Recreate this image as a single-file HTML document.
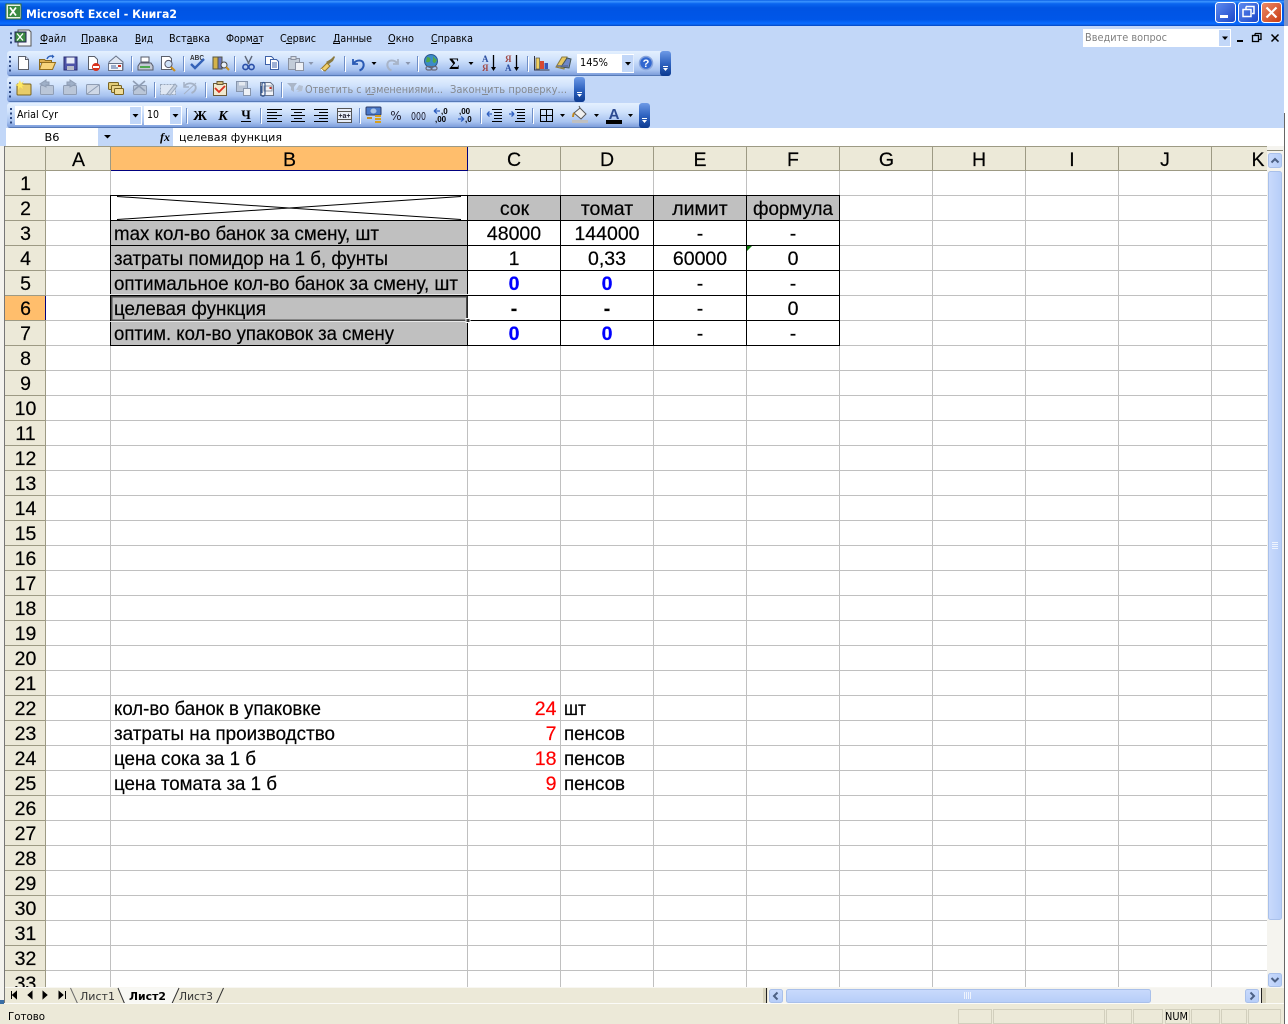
<!DOCTYPE html>
<html><head><meta charset="utf-8"><title>Microsoft Excel - Книга2</title>
<style>
html,body{margin:0;padding:0;background:#fff;width:1288px;height:1024px;overflow:hidden}
svg{display:block}
text{white-space:pre}
.c{font-family:"Liberation Sans",sans-serif;font-size:19.5px;fill:#000;stroke:#000;stroke-width:.2px}
.m{font-family:"DejaVu Sans","Liberation Sans",sans-serif;font-size:10.5px;fill:#000}
.d{font-family:"DejaVu Sans","Liberation Sans",sans-serif;font-size:10.5px;fill:#85898f}
.cm{text-anchor:middle}
.b{font-weight:bold}
.r{fill:#f00;stroke:#f00;text-anchor:end}
.u{stroke:#000;stroke-width:1;shape-rendering:crispEdges}
.s{shape-rendering:crispEdges}
</style></head><body>
<svg width="1288" height="1024" viewBox="0 0 1288 1024" xmlns="http://www.w3.org/2000/svg">
<defs>
<linearGradient id="title" x1="0" y1="0" x2="0" y2="1">
<stop offset="0" stop-color="#0a5fe4"/><stop offset=".06" stop-color="#3d95ff"/><stop offset=".14" stop-color="#0a66f0"/><stop offset=".3" stop-color="#0054e3"/><stop offset=".75" stop-color="#0056e8"/><stop offset=".9" stop-color="#0a6cff"/><stop offset=".97" stop-color="#0a5ce0"/><stop offset="1" stop-color="#0038b0"/>
</linearGradient>
<linearGradient id="tb" x1="0" y1="0" x2="0" y2="1">
<stop offset="0" stop-color="#e4f0fe"/><stop offset=".35" stop-color="#d0e2fc"/><stop offset=".75" stop-color="#a8c3f0"/><stop offset=".95" stop-color="#7f9fdc"/><stop offset="1" stop-color="#3d619f"/>
</linearGradient>
<linearGradient id="chev" x1="0" y1="0" x2="0" y2="1">
<stop offset="0" stop-color="#6e9ae6"/><stop offset=".5" stop-color="#2f63c0"/><stop offset="1" stop-color="#0c3a90"/>
</linearGradient>
<linearGradient id="min" x1="0" y1="0" x2="1" y2="1"><stop offset="0" stop-color="#5f8cf0"/><stop offset="1" stop-color="#1a45c8"/></linearGradient>
<linearGradient id="cls" x1="0" y1="0" x2="1" y2="1"><stop offset="0" stop-color="#ec8b6a"/><stop offset="1" stop-color="#c83a10"/></linearGradient>
<linearGradient id="sb" x1="0" y1="0" x2="1" y2="0"><stop offset="0" stop-color="#c9dafc"/><stop offset="1" stop-color="#b6cdf8"/></linearGradient>
<linearGradient id="sb2" x1="0" y1="0" x2="0" y2="1"><stop offset="0" stop-color="#c9dafc"/><stop offset="1" stop-color="#b6cdf8"/></linearGradient>
</defs>

<!-- window chrome -->
<rect width="1288" height="1024" fill="#fff"/>
<rect x="0" y="26" width="1284" height="102" fill="#c2d7f8"/>
<rect x="0" y="0" width="1284" height="26" fill="url(#title)"/>
<rect x="1284" y="0" width="4" height="26" fill="#8094c4"/>
<rect x="1284" y="113" width="1" height="911" fill="#666" class="s"/>

<!-- title -->
<g>
<rect x="6" y="4" width="15" height="15" fill="#eaf3e4" stroke="#2a6a30" stroke-width="1"/>
<rect x="8" y="6" width="12" height="11" fill="#3a8a40"/>
<path d="M10 7.500l6 8M16 7.500l-6 8" stroke="#fff" stroke-width="1.800"/>
<text x="26" y="18" font-family="DejaVu Sans,Liberation Sans,sans-serif" font-weight="bold" font-size="11.500" fill="#fff" textLength="151" lengthAdjust="spacingAndGlyphs">Microsoft Excel - Книга2</text>
<rect x="1215.500" y="2.500" width="20" height="20" rx="3" fill="url(#min)" stroke="#fff"/>
<rect x="1220" y="15" width="8" height="3" fill="#fff"/>
<rect x="1238.500" y="2.500" width="20" height="20" rx="3" fill="url(#min)" stroke="#fff"/>
<path d="M1246 6.500h8v7h-2M1246 6.500v2.500" fill="none" stroke="#fff" stroke-width="1.500"/>
<rect x="1243" y="9.500" width="8" height="7" fill="none" stroke="#fff" stroke-width="1.500"/>
<rect x="1261.500" y="2.500" width="20" height="20" rx="3" fill="url(#cls)" stroke="#fff"/>
<path d="M1266.500 7.500l10 10M1276.500 7.500l-10 10" stroke="#fff" stroke-width="2.200"/>
</g>

<!-- menu -->
<g>
<path d="M10 33.500h2M10 38h2M10 42.500h2" stroke="#2a4580" stroke-width="2" class="s"/>
<path d="M18 30h11l2 2v14H18z" fill="#f4f6fa" stroke="#555"/>
<rect x="15" y="32" width="11" height="10" fill="#3b8a40" stroke="#225"/>
<path d="M17 33.500l6 7M23 33.500l-6 7" stroke="#fff" stroke-width="1.300"/>
</g>
<text class="m" x="40" y="42" textLength="26" lengthAdjust="spacingAndGlyphs">Файл</text>
<text class="m" x="81" y="42" textLength="37" lengthAdjust="spacingAndGlyphs">Правка</text>
<text class="m" x="135" y="42" textLength="18" lengthAdjust="spacingAndGlyphs">Вид</text>
<text class="m" x="169" y="42" textLength="41" lengthAdjust="spacingAndGlyphs">Вставка</text>
<text class="m" x="226" y="42" textLength="38" lengthAdjust="spacingAndGlyphs">Формат</text>
<text class="m" x="280" y="42" textLength="36" lengthAdjust="spacingAndGlyphs">Сервис</text>
<text class="m" x="333" y="42" textLength="39" lengthAdjust="spacingAndGlyphs">Данные</text>
<text class="m" x="388" y="42" textLength="26" lengthAdjust="spacingAndGlyphs">Окно</text>
<text class="m" x="431" y="42" textLength="42" lengthAdjust="spacingAndGlyphs">Справка</text>
<path class="u" d="M40 43.500h7M81 43.500h7M135 43.500h6M187 43.500h6M252 43.500h8M286 43.500h6M333 43.500h7M388 43.500h7M431 43.500h6"/>

<!-- ask box -->
<rect x="1083" y="29" width="148" height="18" fill="#fff"/>
<rect x="1219" y="30" width="11" height="16" fill="#c2d7f8"/>
<path d="M1222 36.500h6l-3 3.500z" fill="#000"/>
<text class="d" x="1085" y="41" textLength="82" lengthAdjust="spacingAndGlyphs" style="fill:#7f7f7f">Введите вопрос</text>
<rect x="1237" y="40" width="6" height="2" fill="#000"/>
<path d="M1255 33.500h6v6h-2M1255 33.500v2" fill="none" stroke="#000" stroke-width="1.300"/>
<rect x="1252.500" y="35.500" width="6" height="6" fill="none" stroke="#000" stroke-width="1.300"/>
<path d="M1271.500 34.500l7 7M1278.500 34.500l-7 7" stroke="#000" stroke-width="1.500"/>

<!-- toolbars -->
<rect x="7" y="51" width="664" height="25" rx="3" fill="url(#tb)"/>
<rect x="660" y="51" width="11" height="25" rx="3" fill="url(#chev)"/>
<rect x="7" y="77" width="578" height="25" rx="3" fill="url(#tb)"/>
<rect x="574" y="77" width="11" height="25" rx="3" fill="url(#chev)"/>
<rect x="7" y="103" width="643" height="25" rx="3" fill="url(#tb)"/>
<rect x="639" y="103" width="11" height="25" rx="3" fill="url(#chev)"/>
<g fill="#fff" class="s">
<rect x="663" y="66" width="5" height="1"/><rect x="577" y="92" width="5" height="1"/><rect x="642" y="118" width="5" height="1"/>
</g>
<path fill="#fff" d="M663 68h5l-2.500 3zM577 94h5l-2.500 3zM642 120h5l-2.500 3z"/>
<!-- grips -->
<path class="s" stroke="#2a4580" stroke-width="2" d="M10 56v2M10 60.500v2M10 65v2M10 69.500v2M10 82v2M10 86.500v2M10 91v2M10 95.500v2M11 108v2M11 112.500v2M11 117v2M11 121.500v2"/>
<!-- separators -->
<g class="s">
<path stroke="#6f8fc8" d="M131.500 56v15M183.500 56v15M234.500 56v15M344.500 56v15M417.500 56v15M527.500 56v15M154.500 82v15M205.500 82v15M281.500 82v15M186.500 108v15M260.500 108v15M359.500 108v15M480.500 108v15M532.500 108v15"/>
<path stroke="#fff" d="M132.500 57v15M184.500 57v15M235.500 57v15M345.500 57v15M418.500 57v15M528.500 57v15M155.500 83v15M206.500 83v15M282.500 83v15M187.500 109v15M261.500 109v15M360.500 109v15M481.500 109v15M533.500 109v15"/>
</g>

<!-- TB1 icons -->
<path d="M18.500 56.500h7l3 3v10h-10z" fill="#fff" stroke="#5a5f6a"/><path d="M25.500 56.500v3h3" fill="#dde" stroke="#5a5f6a"/>
<path d="M39.500 59.500h5l1 1h6v2h-12zM39.500 62v7.500" fill="#e0b050" stroke="#8a6a20"/>
<path d="M39.500 69.500l2.500-7h13.500l-3 7z" fill="#f8d47c" stroke="#946f20"/>
<path d="M47 59c1-3 4-3.500 6-2.500" fill="none" stroke="#2c5fb8" stroke-width="1.400"/><path d="M52 54.500l2.500 2-2.500 2z" fill="#2c5fb8"/>
<rect x="64" y="57" width="13" height="13" fill="#4e54a8" stroke="#2a2e70"/><rect x="66.500" y="57.500" width="8" height="6" fill="#e8ecf8"/><rect x="67" y="66" width="7" height="4" fill="#b8bcc8"/>
<path d="M88.500 56.500h6l3 3v10h-9z" fill="#fff" stroke="#5a5f6a"/><circle cx="96" cy="67" r="4" fill="#d8301a"/><rect x="93" y="66" width="6" height="2" fill="#fff"/>
<path d="M109 62l7-6 7 6v8h-14z" fill="#dfe7f4" stroke="#6a7488"/><rect x="108.500" y="63.500" width="14" height="7" fill="#f4f6fa" stroke="#6a7488"/><path d="M111 66h5M111 68h7" stroke="#45629a"/><rect x="118" y="65" width="3" height="2" fill="#c83020"/>
<path d="M140 63h11l2 3v4h-15v-4z" fill="#c4c9d6" stroke="#555a68"/><rect x="141" y="57" width="8" height="5" fill="#fff" stroke="#555a68"/><rect x="140" y="66" width="10" height="2" fill="#50a850"/>
<path d="M161.500 56.500h8l2 2v11h-10z" fill="#fff" stroke="#5a5f6a"/><circle cx="168.500" cy="64" r="3.600" fill="#cfe2f8" stroke="#556"/><path d="M171 67l4 4" stroke="#c89020" stroke-width="2.200"/>
<text x="190" y="60" font-family="Liberation Sans,sans-serif" font-size="7" font-weight="bold" fill="#333" textLength="14" lengthAdjust="spacingAndGlyphs">ABC</text>
<path d="M191 64l4 4 9-9" fill="none" stroke="#3462b8" stroke-width="2.400"/>
<rect x="213" y="57" width="5" height="12" fill="#d4b24a" stroke="#554"/><rect x="218" y="57" width="4" height="12" fill="#6a78c0" stroke="#554"/><circle cx="224" cy="65" r="3" fill="#e8f0fa" stroke="#444"/><path d="M226 67l3 3" stroke="#c89020" stroke-width="2"/>
<path d="M245 56l4 8M252 56l-4 8" stroke="#606878" stroke-width="1.400"/><circle cx="245.500" cy="67" r="2.600" fill="none" stroke="#2a4fa8" stroke-width="1.600"/><circle cx="251.500" cy="67" r="2.600" fill="none" stroke="#2a4fa8" stroke-width="1.600"/>
<path d="M265.500 56.500h6l2 2v6h-8z" fill="#fff" stroke="#3e62a8"/><path d="M270.500 59.500h6l2 2v8h-8z" fill="#fff" stroke="#3e62a8"/><path d="M272 63h5M272 65h5M272 67h5" stroke="#3e62a8"/>
<rect x="288.500" y="58.500" width="11" height="11" fill="#c2ccd8" stroke="#8a92a2"/><rect x="291" y="56.500" width="5" height="3" fill="#d6dbe2" stroke="#8a92a2"/><rect x="295.500" y="62.500" width="8" height="8" fill="#eef1f6" stroke="#8a92a2"/>
<path d="M308.500 62h5l-2.500 3z" fill="#8a96ae"/>
<path d="M321 69l6-6 3 3-5 5z" fill="#f0d070" stroke="#987a28"/><path d="M326 62l5-3 3-3 1 1-2 4-4 3z" fill="#8a7a40"/><path d="M321 69l2 2" stroke="#fff"/>
<path d="M353 59v5h5" fill="none" stroke="#2a5ab4" stroke-width="1.800"/><path d="M353.500 63.500c3-4 9-4 10 0 .7 3-1 6-4 7" fill="none" stroke="#2a5ab4" stroke-width="2"/>
<path d="M371.500 62h5l-2.500 3z" fill="#000"/>
<path d="M398 59v5h-5" fill="none" stroke="#a8b4c8" stroke-width="1.800"/><path d="M397.500 63.500c-3-4-9-4-10 0-.7 3 1 6 4 7" fill="none" stroke="#a8b4c8" stroke-width="2"/>
<path d="M405.500 62h5l-2.500 3z" fill="#8a96ae"/>
<circle cx="431" cy="61" r="6.500" fill="#3b8bc8" stroke="#2c5a90"/><path d="M427 57c3 0 4 2 3 4s-3 1-4 1M433 56c1 2 3 3 4 4l-2 3c-2 0-3-2-2-3z" fill="#50a848"/>
<rect x="426" y="66.500" width="6" height="3.500" rx="1.700" fill="none" stroke="#667" stroke-width="1.200"/><rect x="431" y="66.500" width="6" height="3.500" rx="1.700" fill="none" stroke="#667" stroke-width="1.200"/>
<text x="449" y="69" font-family="Liberation Serif,serif" font-weight="bold" font-size="16" fill="#000">Σ</text>
<path d="M468.500 62h5l-2.500 3z" fill="#000"/>
<text x="482" y="62" font-family="Liberation Serif,serif" font-weight="bold" font-size="9" fill="#2c4fa0">А</text>
<text x="482" y="71" font-family="Liberation Serif,serif" font-weight="bold" font-size="9" fill="#a04a48">Я</text>
<path d="M493.500 55v13" stroke="#000" stroke-width="1.300"/><path d="M491 67h5l-2.500 4z" fill="#000"/>
<text x="505" y="62" font-family="Liberation Serif,serif" font-weight="bold" font-size="9" fill="#a04a48">Я</text>
<text x="505" y="71" font-family="Liberation Serif,serif" font-weight="bold" font-size="9" fill="#2c4fa0">А</text>
<path d="M516.500 55v13" stroke="#000" stroke-width="1.300"/><path d="M514 67h5l-2.500 4z" fill="#000"/>
<path class="s" d="M534.500 56v14h15" fill="none" stroke="#334"/><rect x="536" y="58" width="3.500" height="11" fill="#f0d060" stroke="#554" stroke-width=".7"/><rect x="540" y="61" width="4" height="8" fill="#d84830"/><rect x="544.500" y="63" width="3.500" height="6" fill="#3858b8"/>
<path d="M556 67l6-10h5l-3 12z" fill="#e8c860" stroke="#8a7a40"/><path d="M561 67l6-9 4 1-2 9z" fill="#7088c8" stroke="#455"/><path d="M557 66h11" stroke="#5a6a98" stroke-width="1.500"/>
<rect x="577" y="54" width="57" height="19" fill="#fff"/>
<rect x="622" y="55" width="11.500" height="17" fill="#c2d7f8"/><path d="M625 62h6l-3 3.500z" fill="#000"/>
<text class="m" x="580" y="66" textLength="28" lengthAdjust="spacingAndGlyphs" style="fill:#000">145%</text>
<circle cx="646" cy="63" r="6.500" fill="#3268d0" stroke="#8aa6dc" stroke-width="1.500"/><text x="646" y="67" text-anchor="middle" font-family="Liberation Sans,sans-serif" font-weight="bold" font-size="11" fill="#fff">?</text>

<!-- TB2 icons -->
<rect x="17" y="84" width="14" height="11" rx="1" fill="#e8cc68" stroke="#7a6420"/><path d="M20 80l1 3 3-2-2 3 3 1-3 1 1 3-3-2-2 3v-4l-3-1 3-1z" fill="#ffe860"/>
<g fill="#bac6d8" stroke="#8f9db4"><rect x="40.500" y="85.500" width="13" height="9" rx="1"/><path d="M46 80l-6 4 6 3v-2h3v-3h-3z" fill="#9fb0c8"/>
<rect x="63.500" y="85.500" width="13" height="9" rx="1"/><path d="M70 80l6 4-6 3v-2h-3v-3h3z" fill="#9fb0c8"/>
<rect x="86.500" y="84.500" width="13" height="10" rx="1" fill="#cfd8e6"/>
<rect x="133.500" y="85.500" width="13" height="9" rx="1"/></g>
<path d="M87 94l12-9" stroke="#8f9db4"/>
<path d="M133 81l12 10M145 81l-12 10" stroke="#8f9db4" stroke-width="1.600"/>
<rect x="108.500" y="82.500" width="10" height="7" rx="1" fill="#e2cc78" stroke="#7a6420"/><rect x="111.500" y="85.500" width="10" height="7" rx="1" fill="#ead48a" stroke="#7a6420"/><rect x="114.500" y="88.500" width="9" height="6" rx="1" fill="#f0dc98" stroke="#7a6420"/>
<rect x="160.500" y="84.500" width="15" height="10" fill="#dfe7f3" stroke="#9aa8bc" stroke-dasharray="2 1"/><path d="M167 94l8-10 2 2-7 9z" fill="#c8d2e2" stroke="#9aa8bc"/>
<path d="M184 82v5h5" fill="none" stroke="#a5b2c6" stroke-width="1.500"/><path d="M184.500 86c3-4 9-3 11 0 1 3-1 6-4 7" fill="none" stroke="#a5b2c6" stroke-width="1.800"/><path d="M184 94l12-11" stroke="#a5b2c6"/>
<rect x="213.500" y="83.500" width="13" height="12" fill="#f2ead0" stroke="#6a5a38"/><rect x="217" y="81.500" width="6" height="3" fill="#d8c080" stroke="#6a5a38"/><path d="M215 88l4 4 6-6" fill="none" stroke="#d83020" stroke-width="1.800"/>
<rect x="236.500" y="81.500" width="11" height="10" fill="#b8c4d6" stroke="#8795ac"/><rect x="239" y="82" width="6" height="3.500" fill="#e4e9f0"/><rect x="243.500" y="88.500" width="7" height="7" fill="#eef1f6" stroke="#8795ac"/>
<path d="M260.500 82.500h10l3 3v10h-13z" fill="#f2f4f8" stroke="#6a7488"/><rect x="264" y="86" width="8" height="5" fill="#f0f2f6" stroke="#8c94a4"/><rect x="269.500" y="87" width="2" height="2" fill="#c83020"/>
<path d="M261 86v8c0 3 4 3 4 0v-10c0-2-3-2-3 0v9" fill="none" stroke="#3a5a90" stroke-width="1.200"/>
<path d="M287 83h10l-3 4v5l-3-2v-3z" fill="#aab6c8"/><path d="M299 85l4 1-1 5-5 1 2-2-3 0z" fill="#b4c0d2"/>
<text class="d" x="305" y="93" textLength="138" lengthAdjust="spacingAndGlyphs">Ответить с изменениями...</text>
<text class="d" x="450" y="93" textLength="117" lengthAdjust="spacingAndGlyphs">Закончить проверку...</text>
<path d="M367 94.500h7M482 94.500h6" stroke="#85898f" class="s"/>

<!-- TB3 -->
<rect x="15" y="106" width="127" height="19" fill="#fff"/>
<rect x="130" y="107" width="11" height="17" fill="#c2d7f8"/><path d="M132.500 114h6l-3 3.500z" fill="#000"/>
<text class="m" x="17" y="118" textLength="41" lengthAdjust="spacingAndGlyphs">Arial Cyr</text>
<rect x="144" y="106" width="38" height="19" fill="#fff"/>
<rect x="170" y="107" width="11" height="17" fill="#c2d7f8"/><path d="M172.500 114h6l-3 3.500z" fill="#000"/>
<text class="m" x="147" y="118" textLength="12" lengthAdjust="spacingAndGlyphs">10</text>
<text x="200" y="120" text-anchor="middle" font-family="Liberation Serif,serif" font-weight="bold" font-size="14" fill="#000">Ж</text>
<text x="223" y="120" text-anchor="middle" font-family="Liberation Serif,serif" font-weight="bold" font-style="italic" font-size="14" fill="#000">К</text>
<text x="246" y="119" text-anchor="middle" font-family="Liberation Serif,serif" font-weight="bold" font-size="13" fill="#000">Ч</text><path class="s" d="M241 121.500h10" stroke="#000"/>
<g class="s" stroke="#000">
<path d="M267 109.500h15M267 112.500h10M267 115.500h15M267 118.500h10M267 121.500h15"/>
<path d="M291 109.500h14M294 112.500h8M291 115.500h14M294 118.500h8M291 121.500h14"/>
<path d="M314 109.500h14M319 112.500h9M314 115.500h14M319 118.500h9M314 121.500h14"/>
</g>
<rect x="337.500" y="108.500" width="14" height="14" fill="#e8eefa" stroke="#555"/><path class="s" d="M338 111.500h13M338 119.500h13" stroke="#555"/><text x="344.500" y="118" text-anchor="middle" font-family="Liberation Sans,sans-serif" font-weight="bold" font-size="7" fill="#223">+a+</text>
<rect x="366" y="107" width="15" height="8" rx="1" fill="#4a78c8" stroke="#2a3a68"/><ellipse cx="373.500" cy="111" rx="3" ry="2.500" fill="#a8c4e8"/>
<path d="M375 116h6M375 119h6M375 122h6" stroke="#d8a020" stroke-width="2"/><path d="M367 118h5" stroke="#c89020" stroke-width="2"/>
<text x="396" y="120" text-anchor="middle" font-family="DejaVu Sans,sans-serif" font-size="12" fill="#223">%</text>
<text x="418.500" y="120" text-anchor="middle" font-family="DejaVu Sans,sans-serif" font-size="10.500" fill="#223" textLength="15" lengthAdjust="spacingAndGlyphs">000</text>
<path d="M434 111h6M434 111l3-2.500M434 111l3 2.500" stroke="#3060c0" stroke-width="1.300" fill="none"/>
<text x="441" y="114" font-family="Liberation Sans,sans-serif" font-weight="bold" font-size="8" fill="#000">,0</text>
<text x="435" y="122" font-family="Liberation Sans,sans-serif" font-weight="bold" font-size="8" fill="#000">,00</text>
<text x="459" y="114" font-family="Liberation Sans,sans-serif" font-weight="bold" font-size="8" fill="#000">,00</text>
<path d="M458 119h6M464 119l-3-2.500M464 119l-3 2.500" stroke="#3060c0" stroke-width="1.300" fill="none"/>
<text x="465" y="122" font-family="Liberation Sans,sans-serif" font-weight="bold" font-size="8" fill="#000">,0</text>
<g class="s" stroke="#000"><path d="M492 109.500h10M494 112.500h8M494 115.500h8M494 118.500h8M492 121.500h10"/><path d="M515 109.500h10M517 112.500h8M517 115.500h8M517 118.500h8M515 121.500h10"/></g>
<path d="M487 114h5M487 114l2.500-2.500M487 114l2.500 2.500" stroke="#3060c0" stroke-width="1.300" fill="none"/>
<path d="M509 114h5M514 114l-2.500-2.500M514 114l-2.500 2.500" stroke="#3060c0" stroke-width="1.300" fill="none"/>
<rect x="540.500" y="109.500" width="12" height="12" fill="none" stroke="#000" class="s"/><path class="s" d="M546.500 110v11M541 115.500h11" stroke="#000"/>
<path d="M560 114h5l-2.500 3zM594 114h5l-2.500 3zM628 114h5l-2.500 3z" fill="#000"/>
<rect x="572" y="120" width="16" height="3" fill="#c0c0c0"/>
<path d="M574 113l6-5 6 6-5 5z" fill="#f0f0f0" stroke="#555"/><path d="M574 113c-1 2-1 3-1 4" stroke="#c08820" stroke-width="2" fill="none"/><path d="M580 108l-1-2" stroke="#555"/>
<rect x="606" y="120" width="16" height="4" fill="#000"/>
<text x="614" y="119" text-anchor="middle" font-family="Liberation Sans,sans-serif" font-weight="bold" font-size="15" fill="#2c4a90">A</text>

<!-- formula bar -->
<rect x="0" y="128" width="1284" height="18" fill="#fff"/>
<rect x="98" y="128" width="75" height="18" fill="#c2d7f8"/>
<rect x="0" y="128" width="6" height="18" fill="#c2d7f8"/>
<path d="M104 135h7l-3.500 3.500z" fill="#000"/>
<text class="m" x="52" y="141" text-anchor="middle" textLength="15" lengthAdjust="spacingAndGlyphs">B6</text>
<text x="165" y="141" text-anchor="middle" font-family="Liberation Serif,serif" font-style="italic" font-weight="bold" font-size="12" fill="#000">fx</text>
<text class="m" x="179" y="141" textLength="103" lengthAdjust="spacingAndGlyphs">целевая функция</text>

<!-- left strip -->
<rect x="0" y="146" width="5" height="858" fill="#f4f3ee"/>
<rect x="4" y="146" width="1" height="858" fill="#777" class="s"/>

<!-- header -->
<rect x="5" y="146" width="1262" height="25" fill="#ece9d8"/>
<rect x="111" y="147" width="356" height="23" fill="#ffbe6c"/>
<rect x="5" y="171" width="40" height="816" fill="#ece9d8"/>
<rect x="5" y="296" width="40" height="24" fill="#ffbe6c"/>
<rect x="46" y="171" width="1221" height="816" fill="#fff"/>

<!-- table fills -->
<rect x="111" y="221" width="356" height="124" fill="#c0c0c0"/>
<rect x="468" y="196" width="371" height="24" fill="#c0c0c0"/>

<!-- gridlines -->
<path class="s" stroke="#c0c0c0" fill="none" d="M110.500 171V987M467.500 171V987M560.500 171V987M653.500 171V987M746.500 171V987M839.500 171V987M932.500 171V987M1025.500 171V987M1118.500 171V987M1211.500 171V987
M46 195.500H1267M46 220.500H1267M46 245.500H1267M46 270.500H1267M46 295.500H1267M46 320.500H1267M46 345.500H1267M46 370.500H1267M46 395.500H1267M46 420.500H1267M46 445.500H1267M46 470.500H1267M46 495.500H1267M46 520.500H1267M46 545.500H1267M46 570.500H1267M46 595.500H1267M46 620.500H1267M46 645.500H1267M46 670.500H1267M46 695.500H1267M46 720.500H1267M46 745.500H1267M46 770.500H1267M46 795.500H1267M46 820.500H1267M46 845.500H1267M46 870.500H1267M46 895.500H1267M46 920.500H1267M46 945.500H1267M46 970.500H1267"/>
<!-- header lines -->
<path class="s" stroke="#9d9a84" fill="none" d="M5 146.500H1267M5 170.500H1267M45.500 146V987M110.500 146V171M467.500 146V171M560.500 146V171M653.500 146V171M746.500 146V171M839.500 146V171M932.500 146V171M1025.500 146V171M1118.500 146V171M1211.500 146V171
M5 195.500H45M5 220.500H45M5 245.500H45M5 270.500H45M5 295.500H45M5 320.500H45M5 345.500H45M5 370.500H45M5 395.500H45M5 420.500H45M5 445.500H45M5 470.500H45M5 495.500H45M5 520.500H45M5 545.500H45M5 570.500H45M5 595.500H45M5 620.500H45M5 645.500H45M5 670.500H45M5 695.500H45M5 720.500H45M5 745.500H45M5 770.500H45M5 795.500H45M5 820.500H45M5 845.500H45M5 870.500H45M5 895.500H45M5 920.500H45M5 945.500H45M5 970.500H45"/>
<path class="s" stroke="#00007f" fill="none" d="M111 170.500H467.500V147M45.500 296V320"/>

<!-- table borders -->
<path class="s" stroke="#000" fill="none" d="M110.500 195.500H839.500V345.500H110.500ZM110.500 220.500H839.500M110.500 245.500H839.500M110.500 270.500H839.500M110.500 295.500H839.500M110.500 320.500H839.500M467.500 195.500V345.500M560.500 195.500V345.500M653.500 195.500V345.500M746.500 195.500V345.500"/>
<path d="M117 196.500L461 219.500M117 219.500L461 196.500" stroke="#000" stroke-width="1"/>
<path d="M747 246h5l-5 5z" fill="#0a7a0a"/>

<!-- selected cell -->
<rect class="s" x="111.500" y="296.500" width="355" height="23.500" fill="none" stroke="#4c4c4c" stroke-width="1.500"/>
<path class="s" d="M110 294.500H468M110 321.500H465" stroke="#e8e8e8"/>
<rect x="466" y="318.500" width="4" height="4" fill="#333" stroke="#fff"/>

<!-- header labels -->
<g class="c cm">
<text x="78.500" y="166">A</text><text x="289.500" y="166">B</text><text x="514" y="166">C</text><text x="607" y="166">D</text><text x="700" y="166">E</text><text x="793" y="166">F</text><text x="886.500" y="166">G</text><text x="979" y="166">H</text><text x="1072" y="166">I</text><text x="1165" y="166">J</text><text x="1258" y="166">K</text>
<text x="25.500" y="190">1</text><text x="25.500" y="215">2</text><text x="25.500" y="240">3</text><text x="25.500" y="265">4</text><text x="25.500" y="290">5</text><text x="25.500" y="315">6</text><text x="25.500" y="340">7</text><text x="25.500" y="365">8</text><text x="25.500" y="390">9</text><text x="25.500" y="415">10</text><text x="25.500" y="440">11</text><text x="25.500" y="465">12</text><text x="25.500" y="490">13</text><text x="25.500" y="515">14</text><text x="25.500" y="540">15</text><text x="25.500" y="565">16</text><text x="25.500" y="590">17</text><text x="25.500" y="615">18</text><text x="25.500" y="640">19</text><text x="25.500" y="665">20</text><text x="25.500" y="690">21</text><text x="25.500" y="715">22</text><text x="25.500" y="740">23</text><text x="25.500" y="765">24</text><text x="25.500" y="790">25</text><text x="25.500" y="815">26</text><text x="25.500" y="840">27</text><text x="25.500" y="865">28</text><text x="25.500" y="890">29</text><text x="25.500" y="915">30</text><text x="25.500" y="940">31</text><text x="25.500" y="965">32</text><text x="25.500" y="990">33</text>
</g>

<!-- cell text -->
<text class="c" x="114" y="240" textLength="265" lengthAdjust="spacingAndGlyphs">max кол-во банок за смену, шт</text>
<text class="c" x="114" y="265" textLength="274" lengthAdjust="spacingAndGlyphs">затраты помидор на 1 б, фунты</text>
<text class="c" x="114" y="290" textLength="344" lengthAdjust="spacingAndGlyphs">оптимальное кол-во банок за смену, шт</text>
<text class="c" x="114" y="315" textLength="152" lengthAdjust="spacingAndGlyphs">целевая функция</text>
<text class="c" x="114" y="340" textLength="280" lengthAdjust="spacingAndGlyphs">оптим. кол-во упаковок за смену</text>
<g class="c cm">
<text x="514.500" y="215">сок</text><text x="607" y="215">томат</text><text x="700" y="215">лимит</text><text x="793" y="215" textLength="80" lengthAdjust="spacingAndGlyphs">формула</text>
<text x="514" y="240">48000</text><text x="607" y="240">144000</text><text x="700" y="240">-</text><text x="793" y="240">-</text>
<text x="514" y="265">1</text><text x="607" y="265">0,33</text><text x="700" y="265">60000</text><text x="793" y="265">0</text>
<text x="514" y="290" font-weight="bold" style="fill:#00f;stroke:#00f">0</text><text x="607" y="290" font-weight="bold" style="fill:#00f;stroke:#00f">0</text><text x="700" y="290">-</text><text x="793" y="290">-</text>
<text x="514" y="315" font-weight="bold">-</text><text x="607" y="315" font-weight="bold">-</text><text x="700" y="315">-</text><text x="793" y="315">0</text>
<text x="514" y="340" font-weight="bold" style="fill:#00f;stroke:#00f">0</text><text x="607" y="340" font-weight="bold" style="fill:#00f;stroke:#00f">0</text><text x="700" y="340">-</text><text x="793" y="340">-</text>
</g>
<text class="c" x="114" y="715" textLength="207" lengthAdjust="spacingAndGlyphs">кол-во банок в упаковке</text>
<text class="c" x="114" y="740" textLength="221" lengthAdjust="spacingAndGlyphs">затраты на производство</text>
<text class="c" x="114" y="765" textLength="142" lengthAdjust="spacingAndGlyphs">цена сока за 1 б</text>
<text class="c" x="114" y="790" textLength="163" lengthAdjust="spacingAndGlyphs">цена томата за 1 б</text>
<text class="c r" x="556.500" y="715">24</text><text class="c r" x="556.500" y="740">7</text><text class="c r" x="556.500" y="765">18</text><text class="c r" x="556.500" y="790">9</text>
<text class="c" x="564" y="715" textLength="22" lengthAdjust="spacingAndGlyphs">шт</text>
<text class="c" x="564" y="740" textLength="61" lengthAdjust="spacingAndGlyphs">пенсов</text>
<text class="c" x="564" y="765" textLength="61" lengthAdjust="spacingAndGlyphs">пенсов</text>
<text class="c" x="564" y="790" textLength="61" lengthAdjust="spacingAndGlyphs">пенсов</text>

<!-- vertical scrollbar -->
<rect x="1267" y="146" width="17" height="841" fill="#f5f4ef"/>
<path class="s" d="M1267 150.500h16" stroke="#8a8878"/>
<rect x="1268.500" y="153.500" width="13" height="14" rx="2" fill="url(#sb)" stroke="#a9c0ea"/>
<path d="M1271.500 162.500l3.500-3.500 3.500 3.500" fill="none" stroke="#4d6185" stroke-width="2"/>
<rect x="1268.500" y="171.500" width="13" height="748" rx="2" fill="url(#sb)" stroke="#a9c0ea"/>
<path class="s" d="M1272 542.500h6M1272 544.500h6M1272 546.500h6M1272 548.500h6" stroke="#eef3fd"/>
<rect x="1268.500" y="973.500" width="13" height="13" rx="2" fill="url(#sb)" stroke="#a9c0ea"/>
<path d="M1271.500 978l3.500 3.500 3.500-3.500" fill="none" stroke="#4d6185" stroke-width="2"/>

<!-- tab & hscroll bar -->
<rect x="5" y="987" width="1279" height="17" fill="#ece9d8"/>
<path class="s" d="M5 987.500H1284" stroke="#f8f7f2"/>
<path d="M11.500 991v8M16.500 991.500l-4 3.500 4 3.500z M32 991.500l-4 3.500 4 3.500z M43 991.500l4 3.500-4 3.500z M59 991.500l4 3.500-4 3.500z M65.500 991v8" fill="#000" stroke="#000"/>
<path d="M70.500 988l7 15.500H118" fill="none" stroke="#6a6a6a"/>
<path d="M117.500 988l7 15.500h47.500l7-15.500z" fill="#f8f8f4"/>
<path d="M118 988l6.500 15.500" fill="none" stroke="#333"/>
<path d="M172 1003.500l7-15.500M216.500 1003.500l7-15.500" fill="none" stroke="#333"/>
<path d="M172 1003.500h44.500" stroke="#6a6a6a"/>
<text x="80" y="1000" font-family="DejaVu Sans,sans-serif" font-size="11" fill="#333" textLength="35" lengthAdjust="spacingAndGlyphs">Лист1</text>
<text x="129" y="1000" font-family="DejaVu Sans,sans-serif" font-size="11" font-weight="bold" fill="#000" textLength="37" lengthAdjust="spacingAndGlyphs">Лист2</text>
<text x="179" y="1000" font-family="DejaVu Sans,sans-serif" font-size="11" fill="#333" textLength="34" lengthAdjust="spacingAndGlyphs">Лист3</text>

<rect x="763" y="988" width="4" height="15" fill="#d6d2bc"/><rect x="766" y="988" width="1" height="15" fill="#222"/>
<rect x="768" y="988" width="494" height="15" fill="#f5f4ef"/>
<rect x="769.500" y="989.500" width="13" height="13" rx="2" fill="url(#sb2)" stroke="#a9c0ea"/>
<path d="M777.500 992.500l-3.500 3.500 3.500 3.500" fill="none" stroke="#4d6185" stroke-width="2"/>
<rect x="786.500" y="989.500" width="364" height="13" rx="2" fill="url(#sb2)" stroke="#a9c0ea"/>
<path class="s" d="M964.500 992v7M966.500 992v7M968.500 992v7M970.500 992v7" stroke="#eef3fd"/>
<rect x="1245.500" y="989.500" width="13" height="13" rx="2" fill="url(#sb2)" stroke="#a9c0ea"/>
<path d="M1250.500 992.500l3.500 3.500-3.500 3.500" fill="none" stroke="#4d6185" stroke-width="2"/>
<rect x="1262" y="988" width="4" height="15" fill="#d6d2bc"/><rect x="1261" y="988" width="1" height="15" fill="#222"/>

<!-- status -->
<rect x="0" y="1004" width="1284" height="20" fill="#ece9d8"/>
<path class="s" d="M0 1003.500H1284" stroke="#fbfbf8"/>
<rect x="0" y="1000" width="4" height="4" fill="#3a6ea5"/>
<text class="m" x="8" y="1020" textLength="37" lengthAdjust="spacingAndGlyphs">Готово</text>
<g class="s" fill="none" stroke="#d2cfbd">
<rect x="958.500" y="1009.500" width="33" height="14"/><rect x="993.500" y="1009.500" width="111" height="14"/><rect x="1106.500" y="1009.500" width="25" height="14"/><rect x="1133.500" y="1009.500" width="29" height="14"/><rect x="1165.500" y="1009.500" width="24" height="14"/><rect x="1191.500" y="1009.500" width="28" height="14"/><rect x="1221.500" y="1009.500" width="25" height="14"/><rect x="1248.500" y="1009.500" width="32" height="14"/>
</g>
<text class="m" x="1165" y="1020" textLength="23" lengthAdjust="spacingAndGlyphs">NUM</text>
</svg>
</body></html>
